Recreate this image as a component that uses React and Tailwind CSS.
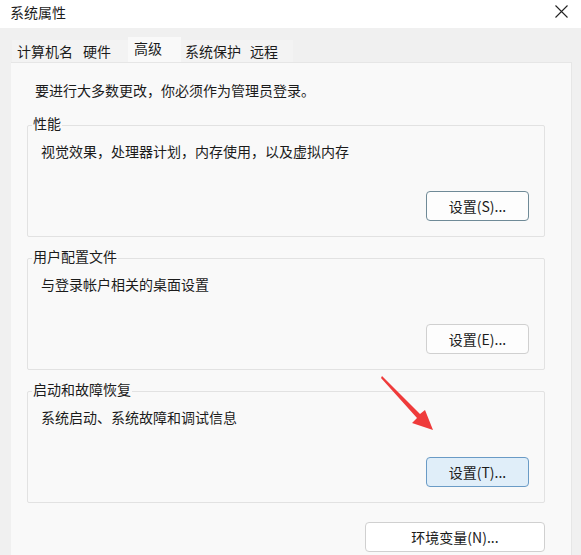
const Btn = ({ children, variant = "normal", className = "" }) => {
  const styles = {
    normal: "bg-[#fdfdfd] border-[#d0d0d0]",
    focused: "bg-[#fdfdfd] border-[#6f8a97]",
    hot: "bg-[#e0eef9] border-[#6a9bc6]",
  };
  return (
    <button
      className={`h-[30px] rounded-[4px] border text-[14px] text-[#1b1b1b] flex items-center justify-center ${styles[variant]} ${className}`}
    >
      {children}
    </button>
  );
};

// group box, label sits on the top border
const Group = ({ title, desc, button, variant }) => (
  <div className="w-[518px] h-[112px] border border-[#e2e2e2] rounded-[2px] pl-[13px] flex flex-col">
    <span className="-mt-[12px] -ml-[9px] self-start bg-[#f9f9f9] px-[1px] text-[14px] leading-[18px]">
      {title}
    </span>
    <p className="mt-[9px] text-[14px] leading-[20px]">{desc}</p>
    <div className="mt-auto mb-[15px] flex justify-end mr-[15px]">
      <Btn variant={variant} className="w-[103px]">
        {button}
      </Btn>
    </div>
  </div>
);

const tabs = [
  { t: "计算机名", pad: "pl-[5px] pr-[10px]" },
  { t: "硬件", pad: "pl-0 pr-[17px]" },
  { t: "高级", pad: "pl-[6px] pr-[19px]", active: true },
  { t: "系统保护", pad: "pl-[4px] pr-[9px]" },
  { t: "远程", pad: "pl-0 pr-[15px]" },
];

export default function App() {
  return (
    <div
      className="relative w-[581px] h-[555px] bg-[#f0f0f0] overflow-hidden text-[#1b1b1b]"
      style={{ fontFamily: '"Noto Sans CJK SC", "Noto Sans", sans-serif' }}
    >
      {/* Title bar */}
      <div className="h-[28px] bg-white flex items-center justify-between pl-[10px] pr-[13px]">
        <span className="text-[14px] leading-none -mt-[4px]">系统属性</span>
        <svg width="13" height="13" viewBox="0 0 13 13" className="-mt-[5px]">
          <path d="M0.5 0.5 L12.5 12.5 M12.5 0.5 L0.5 12.5" stroke="#222" strokeWidth="1.1" fill="none" />
        </svg>
      </div>

      {/* Tabs */}
      <div className="mt-[9px] ml-[12px] flex items-end h-[25px]">
        {tabs.map(({ t, pad, active }) => (
          <div
            key={t}
            className={`${pad} text-[14px] flex items-center ${
              active ? "h-[25px] bg-[#f9f9f9] pb-[3px]" : "h-[22px] bg-[#f3f3f3] pt-[1px]"
            }`}
          >
            {t}
          </div>
        ))}
      </div>

      {/* Panel */}
      <div className="ml-[11px] w-[561px] h-[500px] bg-[#f9f9f9] border-r border-t border-[#e6e6e6] pl-[16px]">
        <p className="pt-[17px] pl-[8px] text-[14px] leading-[20px]">
          要进行大多数更改，你必须作为管理员登录。
        </p>
        <div className="mt-[25px] flex flex-col gap-[21px]">
          <Group
            title="性能"
            desc="视觉效果，处理器计划，内存使用，以及虚拟内存"
            button="设置(S)..."
            variant="focused"
          />
          <Group title="用户配置文件" desc="与登录帐户相关的桌面设置" button="设置(E)..." />
          <Group
            title="启动和故障恢复"
            desc="系统启动、系统故障和调试信息"
            button="设置(T)..."
            variant="hot"
          />
        </div>
        <div className="mt-[19px] w-[518px] flex justify-end">
          <Btn className="w-[180px] bg-white">环境变量(N)...</Btn>
        </div>
      </div>

      {/* Annotation arrow */}
      <svg className="absolute left-0 top-0 pointer-events-none" width="581" height="555">
        <polygon
          points="382,376 420,414 425,410 433,430 412,423 417,418 381,378"
          fill="#ef3b3b"
        />
      </svg>
    </div>
  );
}
